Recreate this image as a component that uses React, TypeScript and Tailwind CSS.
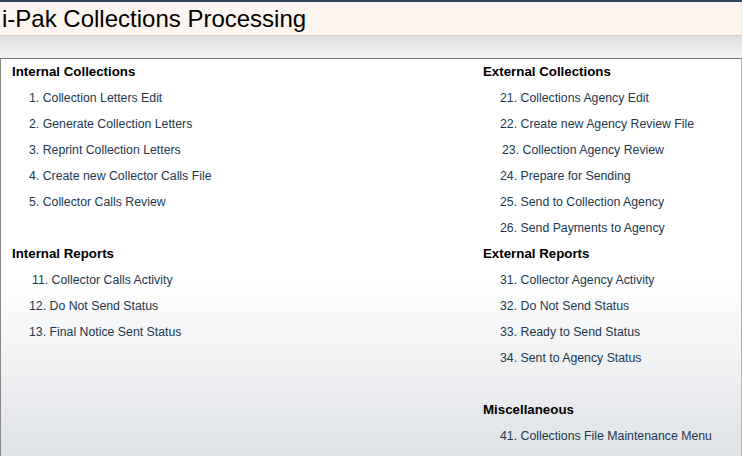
type Row =
  | { kind: 'head'; text: string }
  | { kind: 'item'; text: string; nudge?: string }
  | { kind: 'blank' };

const leftRows: Row[] = [
  { kind: 'head', text: 'Internal Collections' },
  { kind: 'item', text: '1. Collection Letters Edit' },
  { kind: 'item', text: '2. Generate Collection Letters' },
  { kind: 'item', text: '3. Reprint Collection Letters' },
  { kind: 'item', text: '4. Create new Collector Calls File' },
  { kind: 'item', text: '5. Collector Calls Review' },
  { kind: 'blank' },
  { kind: 'head', text: 'Internal Reports' },
  { kind: 'item', text: '11. Collector Calls Activity', nudge: 'ml-[3px]' },
  { kind: 'item', text: '12. Do Not Send Status' },
  { kind: 'item', text: '13. Final Notice Sent Status' },
];

const rightRows: Row[] = [
  { kind: 'head', text: 'External Collections' },
  { kind: 'item', text: '21. Collections Agency Edit' },
  { kind: 'item', text: '22. Create new Agency Review File' },
  { kind: 'item', text: '23. Collection Agency Review', nudge: 'ml-[2px]' },
  { kind: 'item', text: '24. Prepare for Sending' },
  { kind: 'item', text: '25. Send to Collection Agency' },
  { kind: 'item', text: '26. Send Payments to Agency' },
  { kind: 'head', text: 'External Reports' },
  { kind: 'item', text: '31. Collector Agency Activity' },
  { kind: 'item', text: '32. Do Not Send Status' },
  { kind: 'item', text: '33. Ready to Send Status' },
  { kind: 'item', text: '34. Sent to Agency Status' },
  { kind: 'blank' },
  { kind: 'head', text: 'Miscellaneous' },
  { kind: 'item', text: '41. Collections File Maintenance Menu' },
];

function MenuColumn({ rows }: { rows: Row[] }) {
  return (
    <div className="flex flex-col">
      {rows.map((row, i) => {
        if (row.kind === 'blank') return <div key={i} className="h-[26px]" />;
        if (row.kind === 'head')
          return (
            <div key={i} className="flex h-[26px] items-center text-[13.3px] font-bold text-black">
              {row.text}
            </div>
          );
        return (
          <div key={i} className="flex h-[26px] items-center pl-[17px]">
            <a className={`cursor-pointer text-[12.3px] text-[#22384f] ${row.nudge ?? ''}`}>{row.text}</a>
          </div>
        );
      })}
    </div>
  );
}

export default function App() {
  return (
    <div
      className="flex h-[456px] w-[742px] flex-col overflow-hidden bg-white"
      style={{ fontFamily: '"Liberation Sans", Arial, sans-serif' }}
    >
      {/* title band */}
      <div className="h-[2px] bg-[#2a4660]" />
      <div className="flex h-[33px] items-center border-r border-r-[#ece4de] bg-[#fcf5f0] pl-[2px] text-[24px] leading-none text-black">
        i-Pak Collections Processing
      </div>
      <div className="h-[1px] bg-[#cfcfcf]" />
      <div className="h-[22px] bg-gradient-to-b from-[#dedede] to-[#f4f4f4]" />
      <div className="h-[1px] bg-[#7a7a7a]" />

      {/* menu body */}
      <div className="flex flex-1 border-l border-r border-l-[#8a8a8a] border-r-[#b5b5b5] bg-gradient-to-b from-white from-55% to-[#dfe2e6] pl-[11px]">
        <div className="w-[471px]">
          <MenuColumn rows={leftRows} />
        </div>
        <div className="flex-1">
          <MenuColumn rows={rightRows} />
        </div>
      </div>
    </div>
  );
}
